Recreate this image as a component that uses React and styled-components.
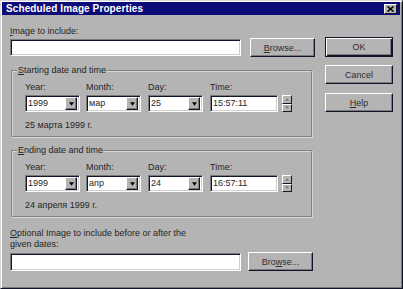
import styled, { createGlobalStyle } from "styled-components"

const GlobalStyle = createGlobalStyle`
  html, body { margin: 0; padding: 0; background: #b4b4b4; }
  body {
    font-family: "Liberation Sans", Arial, sans-serif;
    font-size: 9px;
    color: #262626;
  }
`

const Window = styled.div`
  width: 403px;
  height: 289px;
  box-sizing: border-box;
  background: #b4b4b4;
  border: 1px solid;
  border-color: #d8d8d8 #14142a #14142a #d8d8d8;
  box-shadow: inset 1px 1px #fff, inset -1px -1px #7a7a7a;
  padding: 1px 2px 2px 1px;
  display: flex;
  flex-direction: column;
`

const TitleBar = styled.div`
  flex: none;
  height: 13px;
  background: #0c0c78;
  display: flex;
  align-items: center;
  justify-content: space-between;
  padding: 0 3px 0 4px;
`

const Title = styled.span`
  color: #fff;
  font-weight: bold;
  font-size: 10px;
  letter-spacing: 0.1px;
`

const CloseBox = styled.div`
  width: 13px;
  height: 10px;
  box-sizing: border-box;
  background: #b4b4b4;
  border: 1px solid;
  border-color: #fff #14142a #14142a #fff;
  display: flex;
  align-items: center;
  justify-content: center;
`

const Body = styled.div`
  flex: none;
  display: flex;
  align-items: flex-start;
  padding: 11px 0 0 8px;
  gap: 10px;
`

const LeftCol = styled.div`
  width: 305px;
  display: flex;
  flex-direction: column;
`

const RightCol = styled.div`
  width: 68px;
  display: flex;
  flex-direction: column;
  padding-top: 11px;
`

const Label = styled.div`
  flex: none;
  line-height: 11px;
  margin-top: ${p => p.$mt || 0}px;
  white-space: pre-line;
`

const U = styled.span`
  text-decoration: underline;
  text-underline-offset: 1px;
`

const Row = styled.div`
  flex: none;
  display: flex;
  align-items: center;
  height: 19px;
  gap: ${p => p.$gap}px;
  margin-top: ${p => p.$mt || 0}px;
`

const TextBox = styled.div`
  flex: none;
  box-sizing: border-box;
  width: ${p => p.$w}px;
  height: ${p => p.$h || 17}px;
  background: #fff;
  border: 1px solid;
  border-color: #7a7a7a #fff #fff #7a7a7a;
  box-shadow: inset 1px 1px #14142a, inset -1px -1px #cfcfcf;
  display: flex;
  align-items: center;
  padding-left: 2px;
  line-height: 11px;
`

const Button = styled.div`
  flex: none;
  box-sizing: border-box;
  width: ${p => p.$w}px;
  height: ${p => p.$h || 19}px;
  margin-top: ${p => p.$mt || 0}px;
  background: #b4b4b4;
  border: 1px solid;
  border-color: ${p => (p.$default ? "#14142a" : "#fff #14142a #14142a #fff")};
  box-shadow: ${p =>
    p.$default
      ? "inset 1px 1px #fff, inset -1px -1px #14142a, inset -2px -2px #7a7a7a"
      : "inset -1px -1px #7a7a7a"};
  display: flex;
  align-items: center;
  justify-content: center;
  color: #2e2e2e;
  font-size: 9px;
`

const Group = styled.div`
  flex: none;
  margin: ${p => p.$mt}px 0 0 1px;
  width: 302px;
  height: 68px;
  box-sizing: border-box;
  padding: 0 0 0 12px;
  border: 2px groove #d6d6d6;
  display: flex;
  flex-direction: column;
  align-items: flex-start;
`

const GroupTitle = styled.div`
  line-height: 11px;
  margin: -7px 0 0 -8px;
  padding: 0 1px;
  background: #b4b4b4;
`

const Fields = styled.div`
  display: flex;
  margin-top: 6px;
`

const Field = styled.div`
  width: ${p => p.$w}px;
  margin-right: ${p => p.$mr || 0}px;
  display: flex;
  flex-direction: column;
  gap: 2px;
`

const ComboBox = styled(TextBox)`
  padding-right: 2px;
  justify-content: space-between;
`

const DropBtn = styled.div`
  width: 12px;
  height: 13px;
  box-sizing: border-box;
  background: #b4b4b4;
  border: 1px solid;
  border-color: #fff #14142a #14142a #fff;
  box-shadow: inset -1px -1px #7a7a7a;
  display: flex;
  align-items: center;
  justify-content: center;
`

const TimeWrap = styled.div`
  display: flex;
  gap: 4px;
  align-items: center;
`

const Spin = styled.div`
  display: flex;
  flex-direction: column;
  width: 10px;
`

const SpinBtn = styled.div`
  height: 8.5px;
  box-sizing: border-box;
  background: #b4b4b4;
  border: 1px solid;
  border-color: #fff #14142a #14142a #fff;
  display: flex;
  align-items: center;
  justify-content: center;
`

const DateLine = styled.div`
  line-height: 11px;
  margin-top: 8px;
`

function Arrow({ up, color = "#000", size = 5 }) {
  return (
    <svg width={size} height={Math.ceil(size / 2) + 1} viewBox="0 0 6 4">
      <polygon points={up ? "0,4 6,4 3,0" : "0,0 6,0 3,4"} fill={color} />
    </svg>
  )
}

function Combo({ value }) {
  return (
    <ComboBox $w={55}>
      <span>{value}</span>
      <DropBtn>
        <Arrow />
      </DropBtn>
    </ComboBox>
  )
}

function DateGroup({ legend, mt, year, month, day, time, text }) {
  return (
    <Group $mt={mt}>
      <GroupTitle>{legend}</GroupTitle>
      <Fields>
        <Field $w={55} $mr={6}>
          <Label>Year:</Label>
          <Combo value={year} />
        </Field>
        <Field $w={55} $mr={7}>
          <Label>Month:</Label>
          <Combo value={month} />
        </Field>
        <Field $w={55} $mr={7}>
          <Label>Day:</Label>
          <Combo value={day} />
        </Field>
        <Field $w={82}>
          <Label>Time:</Label>
          <TimeWrap>
            <TextBox $w={68}>{time}</TextBox>
            <Spin>
              <SpinBtn>
                <Arrow up color="#7a7a7a" size={4} />
              </SpinBtn>
              <SpinBtn>
                <Arrow color="#7a7a7a" size={4} />
              </SpinBtn>
            </Spin>
          </TimeWrap>
        </Field>
      </Fields>
      <DateLine>{text}</DateLine>
    </Group>
  )
}

export default function App() {
  return (
    <>
      <GlobalStyle />
      <Window>
        <TitleBar>
          <Title>Scheduled Image Properties</Title>
          <CloseBox>
            <svg width="7" height="6" viewBox="0 0 7 6">
              <path d="M0.5 0.5 L6.5 5.5 M6.5 0.5 L0.5 5.5" stroke="#000" strokeWidth="1.6" />
            </svg>
          </CloseBox>
        </TitleBar>
        <Body>
          <LeftCol>
            <Label>
              <U>I</U>mage to include:
            </Label>
            <Row $gap={9} $mt={1}>
              <TextBox $w={231} $h={17} />
              <Button $w={65}>
                <span>
                  <U>B</U>rowse...
                </span>
              </Button>
            </Row>
            <DateGroup
              mt={13}
              legend={<><U>S</U>tarting date and time</>}
              year="1999"
              month="мар"
              day="25"
              time="15:57:11"
              text="25 марта 1999 г."
            />
            <DateGroup
              mt={12}
              legend={<><U>E</U>nding date and time</>}
              year="1999"
              month="апр"
              day="24"
              time="16:57:11"
              text="24 апреля 1999 г."
            />
            <Label $mt={10}>
              <U>O</U>ptional Image to include before or after the{"\n"}given dates:
            </Label>
            <Row $gap={7} $mt={2}>
              <TextBox $w={231} $h={18} />
              <Button $w={65}>
                <span>
                  Bro<U>w</U>se...
                </span>
              </Button>
            </Row>
          </LeftCol>
          <RightCol>
            <Button $w={68} $h={20} $default>OK</Button>
            <Button $w={68} $mt={8}>Cancel</Button>
            <Button $w={68} $mt={9}>
              <span>
                <U>H</U>elp
              </span>
            </Button>
          </RightCol>
        </Body>
      </Window>
    </>
  )
}
